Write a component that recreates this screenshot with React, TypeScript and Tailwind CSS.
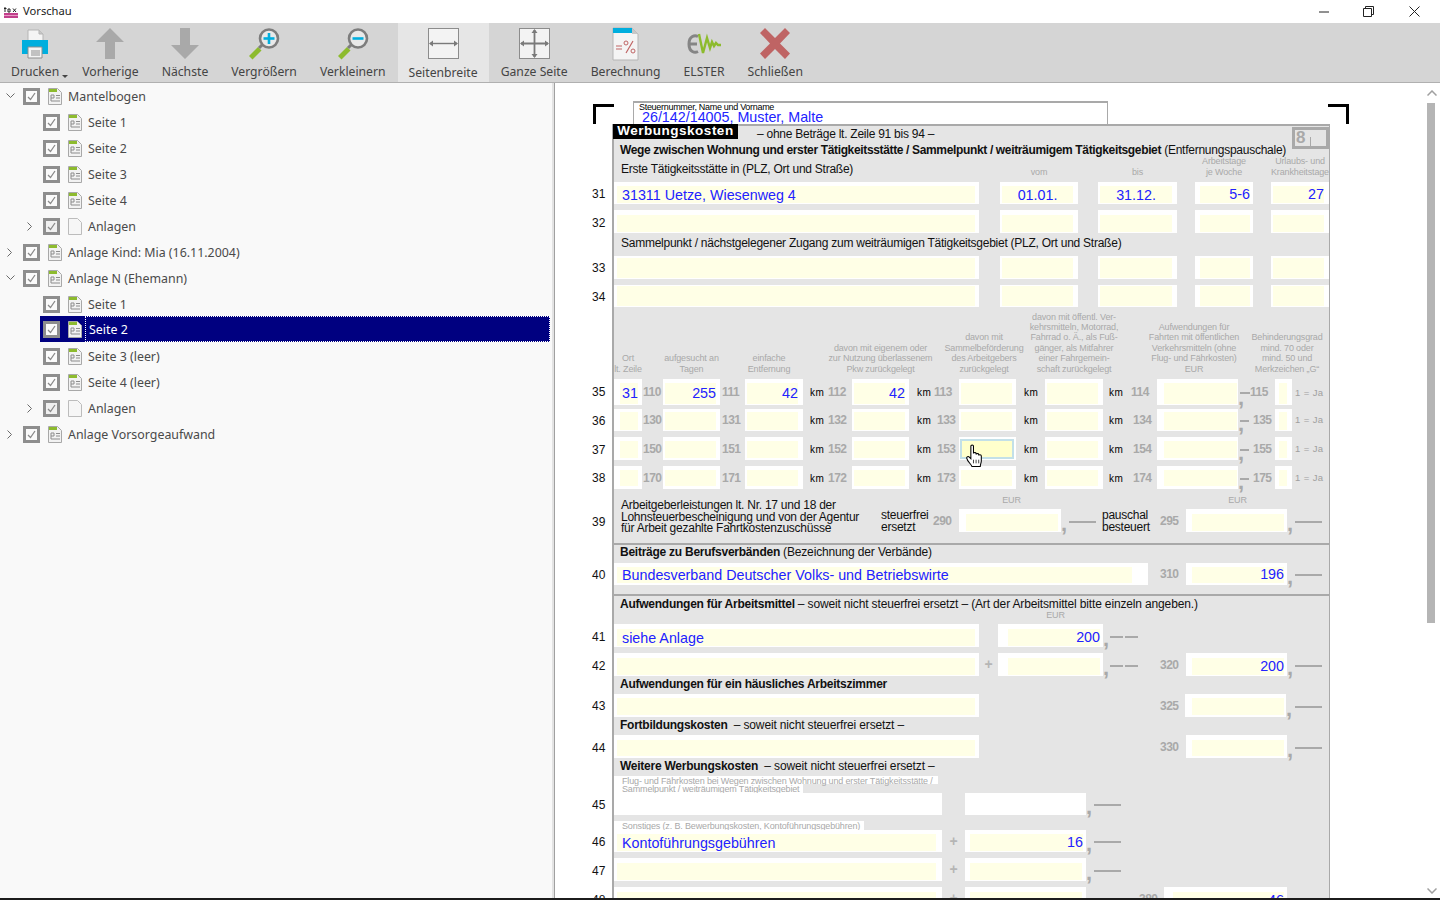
import type { ReactNode } from "react";

// ---------- toolbar icons ----------
function PrinterIcon() {
  return (
    <svg width="28" height="30" viewBox="0 0 28 30">
      <path d="M7 1h11l4 4v7H7z" fill="#f4f4f4" stroke="#b5b5b5" />
      <path d="M18 1v4h4" fill="#c8c8c8" stroke="#b5b5b5" />
      <path d="M1 11h26v14H1z" fill="#00aede" />
      <path d="M7 18h14v11H7z" fill="#f4f4f4" stroke="#8f8f8f" />
      <path d="M10 22h9M10 24h9M10 26h9" stroke="#8f8f8f" />
    </svg>
  );
}

function ArrowIcon({ down }: { down?: boolean }) {
  return (
    <svg width="28" height="33" viewBox="0 0 28 33">
      <path
        d={down ? "M9 1h10v17h9L14 32 0 18h9z" : "M14 1l14 14h-9v17H9V15H0z"}
        fill="#a9a9a9"
      />
    </svg>
  );
}

function MagnifierIcon({ plus }: { plus?: boolean }) {
  return (
    <svg width="34" height="34" viewBox="0 0 34 34">
      <path d="M2 29l9-9 3.5 3.5-9 9z" fill="#8dbb2e" />
      <path d="M12 21l3-3" stroke="#7d7d7d" strokeWidth="3" />
      <circle cx="22" cy="11.5" r="9" fill="#e9e9e9" stroke="#7d7d7d" strokeWidth="2.6" />
      <path d="M16.5 11.5h11" stroke="#00aede" strokeWidth="2.6" />
      {plus && <path d="M22 6v11" stroke="#00aede" strokeWidth="2.6" />}
    </svg>
  );
}

function WidthIcon() {
  return (
    <svg width="31" height="31" viewBox="0 0 31 31">
      <rect x="0.5" y="0.5" width="30" height="30" fill="#f3f3f3" stroke="#8c8c8c" />
      <path d="M2 15.5h27" stroke="#7a7a7a" strokeWidth="1.4" />
      <path d="M1 15.5l4-3v6zM30 15.5l-4-3v6z" fill="#7a7a7a" />
    </svg>
  );
}

function FullPageIcon() {
  return (
    <svg width="31" height="31" viewBox="0 0 31 31">
      <rect x="0.5" y="0.5" width="30" height="30" fill="#f3f3f3" stroke="#8c8c8c" />
      <path d="M2 15.5h27M15.5 2v27" stroke="#7a7a7a" strokeWidth="1.8" />
      <path d="M1 15.5l4-3v6zM30 15.5l-4-3v6zM15.5 1l-3 4h6zM15.5 30l-3-4h6z" fill="#7a7a7a" />
    </svg>
  );
}

function CalcIcon() {
  return (
    <svg width="27" height="34" viewBox="0 0 27 34">
      <path d="M1 1h19l6 6v26H1z" fill="#f4f4f4" stroke="#b5b5b5" />
      <path d="M1 1h19v5H1z" fill="#00aede" />
      <path d="M20 1l6 6h-6z" fill="#c8c8c8" />
      <path d="M4 19h6M4 22h6" stroke="#bf6464" strokeWidth="1.2" />
      <circle cx="14" cy="16" r="2" fill="none" stroke="#bf6464" />
      <circle cx="21" cy="24" r="2" fill="none" stroke="#bf6464" />
      <path d="M21 14l-7 12" stroke="#bf6464" strokeWidth="1.2" />
    </svg>
  );
}

function ElsterIcon() {
  return (
    <svg width="36" height="22" viewBox="0 0 36 22">
      <path d="M12 3.5c-3-1.5-9-1-9 7.5s6 9 9 7.5M3 11h8" fill="none" stroke="#858585" strokeWidth="3" />
      <path d="M13 1l4 19 4-15 3 10 2-6 2 4 2-3 2 2h3" fill="none" stroke="#8dbb2e" strokeWidth="2.4" />
    </svg>
  );
}

function CloseIcon() {
  return (
    <svg width="32" height="33" viewBox="0 0 32 33">
      <path d="M6 1l10 10L26 1l5 5-10 10.500 10 10-5 5.500-10-10L6 32l-5-5.500 10-10L1 6z" fill="#bf6464" />
    </svg>
  );
}

function ToolButton({
  label,
  icon,
  active,
  caret,
}: {
  label: string;
  icon: ReactNode;
  active?: boolean;
  caret?: boolean;
}) {
  return (
    <div className={`flex h-[59px] flex-col items-center ${active ? "bg-[#e6e6e6] px-[11px]" : "px-[11px]"}`}>
      <div className="flex h-[40px] items-center pt-[1px]">{icon}</div>
      <div className={`relative text-[12.200px] leading-[18px] whitespace-nowrap text-[#444444] ${active ? "mt-[1px]" : ""}`}>
        {label}
        {caret && (
          <span className="absolute top-[12px] -right-[9px] h-0 w-0 border-x-[3.500px] border-t-[3.500px] border-x-transparent border-t-[#444444]" />
        )}
      </div>
    </div>
  );
}

// ---------- tree ----------
function PageIcon({ blank }: { blank?: boolean }) {
  if (blank) {
    return (
      <svg width="14" height="17" viewBox="0 0 14 17">
        <path d="M.5.5h9l4 4v12H.5z" fill="#f6f6f6" stroke="#bcbcbc" />
      </svg>
    );
  }
  return (
    <svg width="14" height="17" viewBox="0 0 14 17">
      <path d="M.5.5h9l4 4v12H.5z" fill="#f2f2f2" stroke="#a8a8a8" />
      <path d="M1 1h8v3H1z" fill="#8dbb2e" />
      <path d="M3 7h3v3H3zM3 10v3h9M8 7.500h4M8 10h4" fill="none" stroke="#8c8c8c" />
    </svg>
  );
}

function TreeCheckbox({ dim }: { dim?: boolean }) {
  return (
    <div className={`flex h-[17px] w-[17px] shrink-0 items-center justify-center border-[3px] border-[#8e8e8e] ${dim ? "bg-[#f0f0f0]" : "bg-[#fbfbfb]"}`}>
      <svg width="11" height="11" viewBox="0 0 11 11">
        <path d="M2 6l2.500 2.500L9 2" fill="none" stroke="#8a8a8a" strokeWidth="1.300" />
      </svg>
    </div>
  );
}

type TreeItem = {
  label: string;
  child?: boolean;
  arrow?: "open" | "closed";
  blank?: boolean;
  selected?: boolean;
};

const TREE: TreeItem[] = [
  { label: "Mantelbogen", arrow: "open" },
  { label: "Seite 1", child: true },
  { label: "Seite 2", child: true },
  { label: "Seite 3", child: true },
  { label: "Seite 4", child: true },
  { label: "Anlagen", child: true, arrow: "closed", blank: true },
  { label: "Anlage Kind: Mia (16.11.2004)", arrow: "closed" },
  { label: "Anlage N (Ehemann)", arrow: "open" },
  { label: "Seite 1", child: true },
  { label: "Seite 2", child: true, selected: true },
  { label: "Seite 3 (leer)", child: true },
  { label: "Seite 4 (leer)", child: true },
  { label: "Anlagen", child: true, arrow: "closed", blank: true },
  { label: "Anlage Vorsorgeaufwand", arrow: "closed" },
];

function TreeRow({ item }: { item: TreeItem }) {
  return (
    <div className={`flex h-[26px] items-center ${item.child ? "pl-[20px]" : ""}`}>
      <div className="flex w-[20px] justify-center">
        {item.arrow === "open" && (
          <svg width="9" height="6" viewBox="0 0 9 6">
            <path d="M.5.500l4 4 4-4" fill="none" stroke="#6a6a6a" />
          </svg>
        )}
        {item.arrow === "closed" && (
          <svg width="6" height="9" viewBox="0 0 6 9">
            <path d="M.5.500l4 4-4 4" fill="none" stroke="#6a6a6a" />
          </svg>
        )}
      </div>
      <div className={`flex h-[26px] items-center pl-[3px] ${item.selected ? "relative -top-[1px] w-[510px] bg-[#000080]" : ""}`}>
        <TreeCheckbox dim={item.blank} />
        <div className="ml-[8px] flex w-[14px] items-center">
          <PageIcon blank={item.blank} />
        </div>
        <div
          className={`ml-[3px] flex h-[26px] items-center pl-[3px] text-[12.4px] whitespace-nowrap ${
            item.selected
              ? "flex-1 border border-dotted border-white pt-[3px] text-white"
              : "pt-[2px] text-[#4a4a4a]"
          }`}
        >
          {item.label}
        </div>
      </div>
    </div>
  );
}

// ---------- form ----------
const LABEL = "text-[9px] leading-[10.400px] text-[#a9a9a9] tracking-[-0.15px] whitespace-nowrap";
const TEXT = "text-[12px] leading-[14px] text-[#111111] tracking-[-0.25px] whitespace-nowrap";
const TIGHT = "text-[12px] leading-[11.500px] text-[#111111] tracking-[-0.25px] whitespace-nowrap";
const BOLD = "text-[12px] leading-[14px] font-bold text-[#111111] tracking-[-0.25px] whitespace-nowrap";
const NORMAL = "font-normal tracking-[-0.15px]";
const CODE = "text-[12px] font-bold text-[#a9a9a9] tracking-[-0.5px]";
const KM = "text-[10px] text-black tracking-[0.5px]";
const PLUS = "flex items-center justify-center text-[14px] font-bold text-[#b5b5b5]";

// the columns of lines 35-38
const GRID_COLS =
  "grid grid-cols-[28px_21px_57px_25px_58px_49px_57px_50px_57px_29px_58px_54px_81px_37px_17px_37px]";

function No({ n, tight, className = "" }: { n: number; tight?: boolean; className?: string }) {
  return (
    <span className={`-ml-[22px] flex w-[22px] shrink-0 items-center text-[12px] text-[#111111] ${tight ? "" : "pt-[2px]"} ${className}`}>
      {n}
    </span>
  );
}

function Field({
  className,
  value,
  align = "right",
  focus,
  plain,
  children,
}: {
  className: string;
  value?: string;
  align?: "left" | "center" | "right";
  focus?: boolean;
  plain?: boolean;
  children?: ReactNode;
}) {
  const alignClass =
    align === "left" ? "justify-start pt-[2px] pl-[5px]" : align === "center" ? "justify-center pt-[2px]" : "justify-end";
  return (
    <div className={`flex shrink-0 bg-white ${className}`}>
      {!plain && (
        <div
          className={`relative flex flex-1 items-center text-[14.300px] whitespace-nowrap text-[#2222ff] ${alignClass} ${focus ? "border-2 border-[#c3e0e8] bg-[#ffffcc]" : "bg-[#ffffe6]"}`}
        >
          {value}
          {children}
        </div>
      )}
    </div>
  );
}

// the comma after a money field, and what follows it
function Tail({ className, drop, children }: { className: string; drop?: boolean; children?: ReactNode }) {
  return (
    <div className={`relative flex shrink-0 items-center ${className}`}>
      <span className={`absolute left-0 text-[22px] leading-none font-bold text-[#a9a9a9] ${drop ? "-bottom-[4px]" : "-bottom-[3px]"}`}>
        ,
      </span>
      {children}
    </div>
  );
}

function Dash({ className }: { className: string }) {
  return <span className={`mt-[2px] h-[2px] shrink-0 bg-[#a9a9a9] ${className}`} />;
}

function Code({ children, className }: { children: string; className: string }) {
  return <div className={`flex shrink-0 items-center ${CODE} ${className}`}>{children}</div>;
}

const HEADS: { col: string; lines: string[] }[] = [
  { col: "col-start-1", lines: ["Ort", "lt. Zeile"] },
  { col: "col-start-3", lines: ["aufgesucht an", "Tagen"] },
  { col: "col-start-5 pr-[10px]", lines: ["einfache", "Entfernung"] },
  { col: "col-start-7", lines: ["davon mit eigenem oder", "zur Nutzung überlassenem", "Pkw zurückgelegt"] },
  { col: "col-start-9 pr-[7px]", lines: ["davon mit", "Sammelbeförderung", "des Arbeitgebers", "zurückgelegt"] },
  {
    col: "col-start-11",
    lines: [
      "davon mit öffentl. Ver-",
      "kehrsmitteln, Motorrad,",
      "Fahrrad o. Ä., als Fuß-",
      "gänger, als Mitfahrer",
      "einer Fahrgemein-",
      "schaft zurückgelegt",
    ],
  },
  {
    col: "col-start-13 pr-[7px]",
    lines: ["Aufwendungen für", "Fahrten mit öffentlichen", "Verkehrsmitteln (ohne", "Flug- und Fährkosten)", "EUR"],
  },
  { col: "col-start-15 pl-[7px]", lines: ["Behinderungsgrad", "mind. 70 oder", "mind. 50 und", "Merkzeichen „G“"] },
];

const GRID_ROWS = [
  { n: 35, row: "mt-0 h-[23px]", inset: "pt-[4px] pb-[1px]", codes: ["110", "111", "112", "113", "114", "115"], values: ["31", "255", "42", "42"] },
  { n: 36, row: "mt-[7px] h-[22px]", inset: "pt-[3px] pb-[1px]", codes: ["130", "131", "132", "133", "134", "135"], values: [] as string[] },
  { n: 37, row: "mt-[6px] h-[23px]", inset: "pt-[4px] pb-[2px]", codes: ["150", "151", "152", "153", "154", "155"], values: [] as string[] },
  { n: 38, row: "mt-[6px] h-[23px]", inset: "pt-[4px] pb-[3px]", codes: ["170", "171", "172", "173", "174", "175"], values: [] as string[] },
];

const TOP_ROWS = [
  { n: 31, row: "h-[22px]", inset: "pt-[4px] pb-[1px]", values: ["31311 Uetze, Wiesenweg 4", "01.01.", "31.12.", "5-6", "27"] },
  { n: 32, row: "mt-[6px] h-[23px]", inset: "pt-[5px] pb-[1px]", values: [] as string[] },
  { n: 33, row: "h-[23px]", inset: "pt-[2px] pb-[1px]", values: [] as string[] },
  { n: 34, row: "mt-[6px] h-[22px]", inset: "pt-[1px] pb-[1px]", values: [] as string[] },
];

function TopRow({ r }: { r: (typeof TOP_ROWS)[number] }) {
  return (
    <div className={`flex ${r.row}`}>
      <No n={r.n} tight={r.n === 33} />
      <Field className={`w-[365px] pr-[4px] pl-[3px] ${r.inset}`} value={r.values[0]} align="left" />
      <Field className={`ml-[21px] w-[78px] pr-[5px] pl-[2px] ${r.inset}`} value={r.values[1]} align="center" />
      <Field className={`ml-[20px] w-[79px] pr-[5px] pl-[2px] ${r.inset}`} value={r.values[2]} align="center" />
      <Field className={`ml-[18px] w-[58px] pr-[3px] pl-[5px] ${r.inset}`} value={r.values[3]} />
      <Field className={`ml-[18px] w-[58px] pr-[5px] pl-[2px] ${r.inset}`} value={r.values[4]} />
    </div>
  );
}

function GridRow({ r, first, focusRow }: { r: (typeof GRID_ROWS)[number]; first?: boolean; focusRow?: boolean }) {
  return (
    <div className={`flex ${r.row}`}>
      <No n={r.n} tight={r.n === 38} />
      <div className={GRID_COLS}>
        <Field className={`pr-[4px] pl-[6px] ${r.inset}`} value={r.values[0]} />
        <Code className="pl-[1px]">{r.codes[0]}</Code>
        <Field className={`pr-[4px] pl-[2px] ${r.inset}`} value={r.values[1]} />
        <Code className="pl-[2px]">{r.codes[1]}</Code>
        <Field className={`pr-[5px] pl-[2px] ${r.inset}`} value={r.values[2]} />
        <div className="flex items-center pl-[7px]">
          <span className={`w-[18px] pt-[1px] ${KM}`}>km</span>
          <span className={CODE}>{r.codes[2]}</span>
        </div>
        <Field className={`pr-[4px] pl-[2px] ${r.inset}`} value={r.values[3]} />
        <div className="flex items-center pl-[8px]">
          <span className={`pt-[1px] ${first ? "w-[17px]" : "w-[20px]"} ${KM}`}>km</span>
          <span className={CODE}>{r.codes[3]}</span>
        </div>
        {focusRow ? (
          <Field className="pt-[2px] pr-[2px] pb-[1px] pl-[1px]" focus>
            <HandCursor />
          </Field>
        ) : (
          <Field className={`pr-[4px] pl-[2px] ${r.inset}`} />
        )}
        <div className={`flex items-center pt-[1px] pl-[8px] ${KM}`}>km</div>
        <Field className={`pr-[5px] pl-[2px] ${r.inset}`} />
        <div className="flex items-center pl-[6px]">
          <span className={`pt-[1px] ${first ? "w-[22px]" : "w-[24px]"} ${KM}`}>km</span>
          <span className={CODE}>{r.codes[4]}</span>
        </div>
        <Field className={`pr-[1px] pl-[7px] ${r.inset}`} />
        <Tail className="pl-[2px]" drop>
          <Dash className={first ? "w-[10px]" : "w-[9px]"} />
          <span className={`${CODE} ${first ? "" : "pl-[4px]"}`}>{r.codes[5]}</span>
        </Tail>
        <Field className={`pr-[5px] pl-[4px] ${r.inset}`} />
        <div className="flex items-center pt-[1px] pl-[3px] text-[9.500px] tracking-[0.4px] whitespace-nowrap text-[#a0a0a0]">
          1 = Ja
        </div>
      </div>
    </div>
  );
}

function HandCursor() {
  return (
    <svg className="absolute top-[3px] left-[3px]" width="18" height="23" viewBox="0 0 16 22">
      <path
        d="M5 2c0-1.300 2.500-1.300 2.500 0v7c0-1.200 2.500-1.200 2.500 0v1c0-1.200 2.500-1.200 2.500 0v1c0-1 2.500-1 2.500 .500v4.500c0 2-.800 3-1 5.500H6c-.500-2-4.500-5-5-8-.200-1.300 1.500-2 2.500-1L5 14z"
        fill="#ffffff"
        stroke="#000000"
      />
      <path d="M7.500 15v3.500M10 15v3.500M12.500 15v3.500" stroke="#000000" strokeWidth="0.700" />
    </svg>
  );
}

function FormPage() {
  return (
    <div className="min-w-0 flex-1 overflow-hidden bg-white pt-[18px] font-['Liberation_Sans',sans-serif]">
      {/* crop marks and the tax number box */}
      <div className="flex h-[23px] pl-[38px]">
        <div className="mt-[3px] h-[20px] w-[21px] border-t-[3px] border-l-[3px] border-black" />
        <div className="ml-[19px] flex w-[475px] flex-col border-x border-t-2 border-[#a9a9a9]">
          <div className="pl-[5px] text-[9px] leading-[8px] tracking-[-0.3px] whitespace-nowrap text-black">
            Steuernummer, Name und Vorname
          </div>
          <div className="pl-[8px] text-[14.300px] leading-[13px] whitespace-nowrap text-[#2222ff]">
            26/142/14005, Muster, Malte
          </div>
        </div>
        <div className="mt-[3px] ml-[220px] h-[20px] w-[21px] border-t-[3px] border-r-[3px] border-black" />
      </div>

      {/* form body */}
      <div className="ml-[57px] h-[790px] w-[718px] border-t-2 border-r border-l-2 border-[#a9a9a9] bg-[#e5e5e5]">
        <div className="flex h-[18px] items-start">
          <div className="-mt-[2px] -ml-px flex h-[15px] w-[125px] items-center justify-center bg-black text-[13.500px] font-bold tracking-[0.5px] text-white">
            Werbungskosten
          </div>
          <div className={`ml-[19px] pt-px ${TEXT}`}>– ohne Beträge lt. Zeile 91 bis 94 –</div>
          <div className="relative mt-px ml-auto h-[22px] w-[37px] border-[3px] border-[#a9a9a9] text-[17px] leading-[15px] font-bold text-[#a9a9a9]">
            <span className="pl-px">8</span>
            <span className="absolute top-[7px] left-[15px] h-[12px] w-px bg-[#a9a9a9]" />
          </div>
        </div>
        <div className="h-[13px] pl-[6px] text-[12px] leading-[13px] font-bold tracking-[-0.35px] whitespace-nowrap text-[#111111]">
          Wege zwischen Wohnung und erster Tätigkeitsstätte / Sammelpunkt / weiträumigem Tätigkeitsgebiet
          <span className="font-normal tracking-[-0.25px]">&nbsp;(Entfernungspauschale)</span>
        </div>
        <div className="flex h-[25px]">
          <div className={`w-[365px] pt-[5px] pl-[7px] ${TEXT}`}>Erste Tätigkeitsstätte in (PLZ, Ort und Straße)</div>
          <div className={`ml-[21px] flex w-[78px] flex-col items-center justify-end pb-[5px] ${LABEL}`}>vom</div>
          <div className={`ml-[20px] flex w-[79px] flex-col items-center justify-end pb-[5px] ${LABEL}`}>bis</div>
          <div className={`ml-[18px] flex w-[58px] flex-col items-center justify-end pb-[5px] ${LABEL}`}>
            <span>Arbeitstage</span>
            <span>je Woche</span>
          </div>
          <div className={`ml-[18px] flex w-[58px] flex-col items-center justify-end pb-[5px] ${LABEL}`}>
            <span>Urlaubs- und</span>
            <span>Krankheitstage</span>
          </div>
        </div>

        <TopRow r={TOP_ROWS[0]} />
        <TopRow r={TOP_ROWS[1]} />
        <div className={`h-[23px] pt-[3px] pl-[7px] ${TEXT}`}>
          Sammelpunkt / nächstgelegener Zugang zum weiträumigen Tätigkeitsgebiet (PLZ, Ort und Straße)
        </div>
        <TopRow r={TOP_ROWS[2]} />
        <TopRow r={TOP_ROWS[3]} />

        <div className={`h-[72px] ${GRID_COLS}`}>
          {HEADS.map((h) => (
            <div key={h.col} className={`flex flex-col items-center justify-end pb-[5px] ${h.col} ${LABEL}`}>
              {h.lines.map((t) => (
                <span key={t}>{t}</span>
              ))}
            </div>
          ))}
        </div>

        <GridRow r={GRID_ROWS[0]} first />
        <GridRow r={GRID_ROWS[1]} />
        <GridRow r={GRID_ROWS[2]} focusRow />
        <GridRow r={GRID_ROWS[3]} />

        {/* line 39 */}
        <div className="flex h-[54px]">
          <No n={39} className="mt-[20px] h-[23px]" />
          <div className={`flex w-[267px] shrink-0 flex-col pt-[11px] pl-[7px] ${TIGHT}`}>
            <span>Arbeitgeberleistungen lt. Nr. 17 und 18 der</span>
            <span>Lohnsteuerbescheinigung und von der Agentur</span>
            <span>für Arbeit gezahlte Fahrtkostenzuschüsse</span>
          </div>
          <div className={`flex w-[52px] shrink-0 flex-col pt-[21px] ${TIGHT}`}>
            <span>steuerfrei</span>
            <span>ersetzt</span>
          </div>
          <Code className="mt-[20px] h-[23px] w-[26px]">290</Code>
          <div className="flex w-[102px] shrink-0 flex-col">
            <div className={`h-[20px] pt-[6px] pl-[3px] text-center ${LABEL}`}>EUR</div>
            <Field className="h-[23px] pt-[5px] pr-[3px] pb-px pl-[7px]" />
          </div>
          <Tail className="mt-[20px] h-[23px] w-[41px] pl-[8px]">
            <Dash className="w-[27px]" />
          </Tail>
          <div className={`flex w-[58px] shrink-0 flex-col pt-[21px] ${TIGHT}`}>
            <span>pauschal</span>
            <span>besteuert</span>
          </div>
          <Code className="mt-[20px] h-[23px] w-[26px]">295</Code>
          <div className="flex w-[101px] shrink-0 flex-col">
            <div className={`h-[20px] pt-[6px] pl-[2px] text-center ${LABEL}`}>EUR</div>
            <Field className="h-[23px] pt-[5px] pr-[3px] pb-px pl-[6px]" />
          </div>
          <Tail className="mt-[20px] h-[23px] pl-[8px]">
            <Dash className="w-[27px]" />
          </Tail>
        </div>
        <div className="h-[2px] bg-[#a9a9a9]" />

        {/* line 40 */}
        <div className={`h-[18px] pl-[6px] ${BOLD}`}>
          Beiträge zu Berufsverbänden <span className={NORMAL}>(Bezeichnung der Verbände)</span>
        </div>
        <div className="flex h-[22px]">
          <No n={40} />
          <Field
            className="w-[534px] pt-[4px] pr-[16px] pb-[2px] pl-[3px]"
            value="Bundesverband Deutscher Volks- und Betriebswirte"
            align="left"
          />
          <Code className="ml-[12px] w-[26px]">310</Code>
          <Field className="w-[101px] pt-[4px] pr-[3px] pb-[2px] pl-[6px]" value="196" />
          <Tail className="pl-[8px]">
            <Dash className="w-[27px]" />
          </Tail>
        </div>
        <div className="mt-[9px] h-[2px] bg-[#a9a9a9]" />

        {/* lines 41-42 */}
        <div className={`h-[14px] pt-px pl-[6px] ${BOLD}`}>
          Aufwendungen für Arbeitsmittel{" "}
          <span className={NORMAL}>– soweit nicht steuerfrei ersetzt – (Art der Arbeitsmittel bitte einzeln angeben.)</span>
        </div>
        <div className={`ml-[384px] h-[14px] w-[105px] pl-[10px] text-center ${LABEL}`}>EUR</div>
        <div className="flex h-[23px]">
          <No n={41} />
          <Field className="w-[365px] pt-[5px] pr-[4px] pb-px pl-[3px]" value="siehe Anlage" align="left" />
          <Field className="ml-[19px] w-[105px] pt-[5px] pr-[3px] pb-px pl-[10px]" value="200" />
          <Tail className="pl-[7px]">
            <Dash className="w-[13px]" />
            <Dash className="ml-[2px] w-[13px]" />
          </Tail>
        </div>
        <div className="mt-[6px] flex h-[23px]">
          <No n={42} />
          <Field className="w-[365px] pt-[5px] pr-[4px] pb-px pl-[3px]" />
          <div className={`w-[19px] ${PLUS}`}>+</div>
          <Field className="w-[105px] pt-[5px] pr-[3px] pb-px pl-[10px]" />
          <Tail className="w-[57px] pl-[7px]">
            <Dash className="w-[13px]" />
            <Dash className="ml-[2px] w-[13px]" />
          </Tail>
          <Code className="w-[26px]">320</Code>
          <Field className="w-[101px] pt-[5px] pr-[3px] pb-px pl-[6px]" value="200" />
          <Tail className="pl-[8px]">
            <Dash className="w-[27px]" />
          </Tail>
        </div>

        {/* line 43 */}
        <div className={`h-[18px] pt-px pl-[6px] ${BOLD}`}>Aufwendungen für ein häusliches Arbeitszimmer</div>
        <div className="flex h-[23px]">
          <No n={43} tight />
          <Field className="w-[365px] pt-[4px] pr-[4px] pb-[2px] pl-[3px]" />
          <Code className="ml-[181px] w-[25px]">325</Code>
          <Field className="w-[101px] pt-[4px] pr-[2px] pb-[2px] pl-[7px]" />
          <Tail className="pl-[9px]">
            <Dash className="w-[27px]" />
          </Tail>
        </div>

        {/* line 44 */}
        <div className={`h-[18px] pt-px pl-[6px] ${BOLD}`}>
          Fortbildungskosten <span className={NORMAL}>&nbsp;– soweit nicht steuerfrei ersetzt –</span>
        </div>
        <div className="flex h-[23px]">
          <No n={44} />
          <Field className="w-[365px] pt-[5px] pr-[4px] pb-[2px] pl-[3px]" />
          <Code className="ml-[181px] w-[26px]">330</Code>
          <Field className="w-[101px] pt-[5px] pr-[3px] pb-[2px] pl-[6px]" />
          <Tail className="pl-[8px]">
            <Dash className="w-[27px]" />
          </Tail>
        </div>

        {/* lines 45-48 */}
        <div className={`h-[18px] pt-px pl-[6px] ${BOLD}`}>
          Weitere Werbungskosten <span className={NORMAL}>&nbsp;– soweit nicht steuerfrei ersetzt –</span>
        </div>
        <div className={`h-[8px] w-[324px] bg-white pl-[8px] leading-[7px] ${LABEL}`}>
          Flug- und Fährkosten bei Wegen zwischen Wohnung und erster Tätigkeitsstätte /
        </div>
        <div className={`h-[9px] w-[189px] bg-white pl-[8px] leading-[8px] ${LABEL}`}>
          Sammelpunkt / weiträumigem Tätigkeitsgebiet
        </div>
        <div className="flex h-[22px]">
          <No n={45} />
          <Field className="w-[328px]" plain />
          <Field className="ml-[23px] w-[121px]" plain />
          <Tail className="pl-[8px]">
            <Dash className="w-[27px]" />
          </Tail>
        </div>
        <div className={`mt-[6px] h-[9px] w-[250px] bg-white pl-[8px] leading-[8px] ${LABEL}`}>
          Sonstiges (z. B. Bewerbungskosten, Kontoführungsgebühren)
        </div>
        <div className="flex h-[22px]">
          <No n={46} />
          <Field className="w-[328px] pt-[4px] pr-[6px] pb-px pl-[3px]" value="Kontoführungsgebühren" align="left" />
          <div className={`w-[23px] ${PLUS}`}>+</div>
          <Field className="w-[121px] pt-[4px] pr-[3px] pb-px pl-[5px]" value="16" />
          <Tail className="pl-[8px]">
            <Dash className="w-[27px]" />
          </Tail>
        </div>
        <div className="mt-[6px] flex h-[23px]">
          <No n={47} />
          <Field className="w-[328px] pt-[5px] pr-[6px] pb-px pl-[3px]" />
          <div className={`w-[23px] ${PLUS}`}>+</div>
          <Field className="w-[121px] pt-[5px] pr-[4px] pb-px pl-[5px]" />
          <Tail className="pl-[8px]">
            <Dash className="w-[27px]" />
          </Tail>
        </div>
        <div className="mt-[6px] flex h-[23px]">
          <No n={48} />
          <Field className="w-[328px] pt-[5px] pr-[6px] pb-px pl-[3px]" />
          <div className={`w-[23px] ${PLUS}`}>+</div>
          <Field className="w-[121px] pt-[5px] pr-[4px] pb-px pl-[5px]" />
          <Code className="ml-[53px] w-[25px]">380</Code>
          <Field className="w-[123px] pt-[5px] pr-[3px] pb-px pl-[9px]" value="46" />
        </div>
      </div>
    </div>
  );
}

export default function App() {
  return (
    <div className="flex h-screen w-[1440px] flex-col overflow-hidden bg-white font-['Noto_Sans',sans-serif]">
      {/* title bar */}
      <div className="flex h-[23px] items-center bg-white pl-[4px]">
        <svg width="14" height="14" viewBox="0 0 14 14">
          <path d="M0 8h14v5H0z" fill="#c2408c" />
          <path d="M0 10h14v1H0z" fill="#e89ac4" />
          <path d="M1 2v5M0 3.500h2.500M4 4h2v3H4zM9 3.500l3 3.500M12 3.500L9 7" fill="none" stroke="#222222" />
        </svg>
        <span className="ml-[5px] text-[11.200px] text-[#222222]">Vorschau</span>
        <div className="ml-auto flex items-center pr-[3px] text-[#222222]">
          <div className="flex w-[45px] justify-center">
            <svg width="10" height="10" viewBox="0 0 10 10">
              <path d="M0 5h10" stroke="currentColor" />
            </svg>
          </div>
          <div className="flex w-[45px] justify-center">
            <svg width="11" height="11" viewBox="0 0 11 11">
              <path d="M.5 2.500h8v8h-8zM2.500 2.500v-2h8v8h-2" fill="none" stroke="currentColor" />
            </svg>
          </div>
          <div className="flex w-[46px] justify-center">
            <svg width="11" height="11" viewBox="0 0 11 11">
              <path d="M.5.500l10 10M10.500.500l-10 10" fill="none" stroke="currentColor" />
            </svg>
          </div>
        </div>
      </div>

      {/* toolbar */}
      <div className="flex h-[60px] gap-[1px] border-b border-[#b0b0b0] bg-[#d5d5d5]">
        <ToolButton label="Drucken" caret icon={<PrinterIcon />} />
        <ToolButton label="Vorherige" icon={<ArrowIcon />} />
        <ToolButton label="Nächste" icon={<ArrowIcon down />} />
        <ToolButton label="Vergrößern" icon={<MagnifierIcon plus />} />
        <ToolButton label="Verkleinern" icon={<MagnifierIcon />} />
        <ToolButton label="Seitenbreite" active icon={<WidthIcon />} />
        <ToolButton label="Ganze Seite" icon={<FullPageIcon />} />
        <ToolButton label="Berechnung" icon={<CalcIcon />} />
        <ToolButton label="ELSTER" icon={<ElsterIcon />} />
        <ToolButton label="Schließen" icon={<CloseIcon />} />
      </div>

      {/* content */}
      <div className="flex min-h-0 flex-1">
        <div className="w-[552px] bg-[#f9f9f9]">
          {TREE.map((item, i) => (
            <TreeRow key={i} item={item} />
          ))}
        </div>
        <div className="w-[3px] border-r border-[#a0a0a0] bg-[#e3e3e3]" />
        <FormPage />
        <div className="flex w-[17px] flex-col items-center bg-white">
          <svg className="mt-[7px]" width="10" height="6" viewBox="0 0 10 6">
            <path d="M.5 5.500L5 1l4.500 4.500" fill="none" stroke="#a0a0a0" strokeWidth="1.500" />
          </svg>
          <div className="mt-[7px] mr-[2px] h-[520px] w-[8px] bg-[#b5b5b5]" />
          <svg className="mt-auto mb-[4px]" width="10" height="6" viewBox="0 0 10 6">
            <path d="M.5.500L5 5l4.500-4.500" fill="none" stroke="#a0a0a0" strokeWidth="1.500" />
          </svg>
        </div>
      </div>
      <div className="h-[2px] bg-[#1c1c1c]" />
    </div>
  );
}
